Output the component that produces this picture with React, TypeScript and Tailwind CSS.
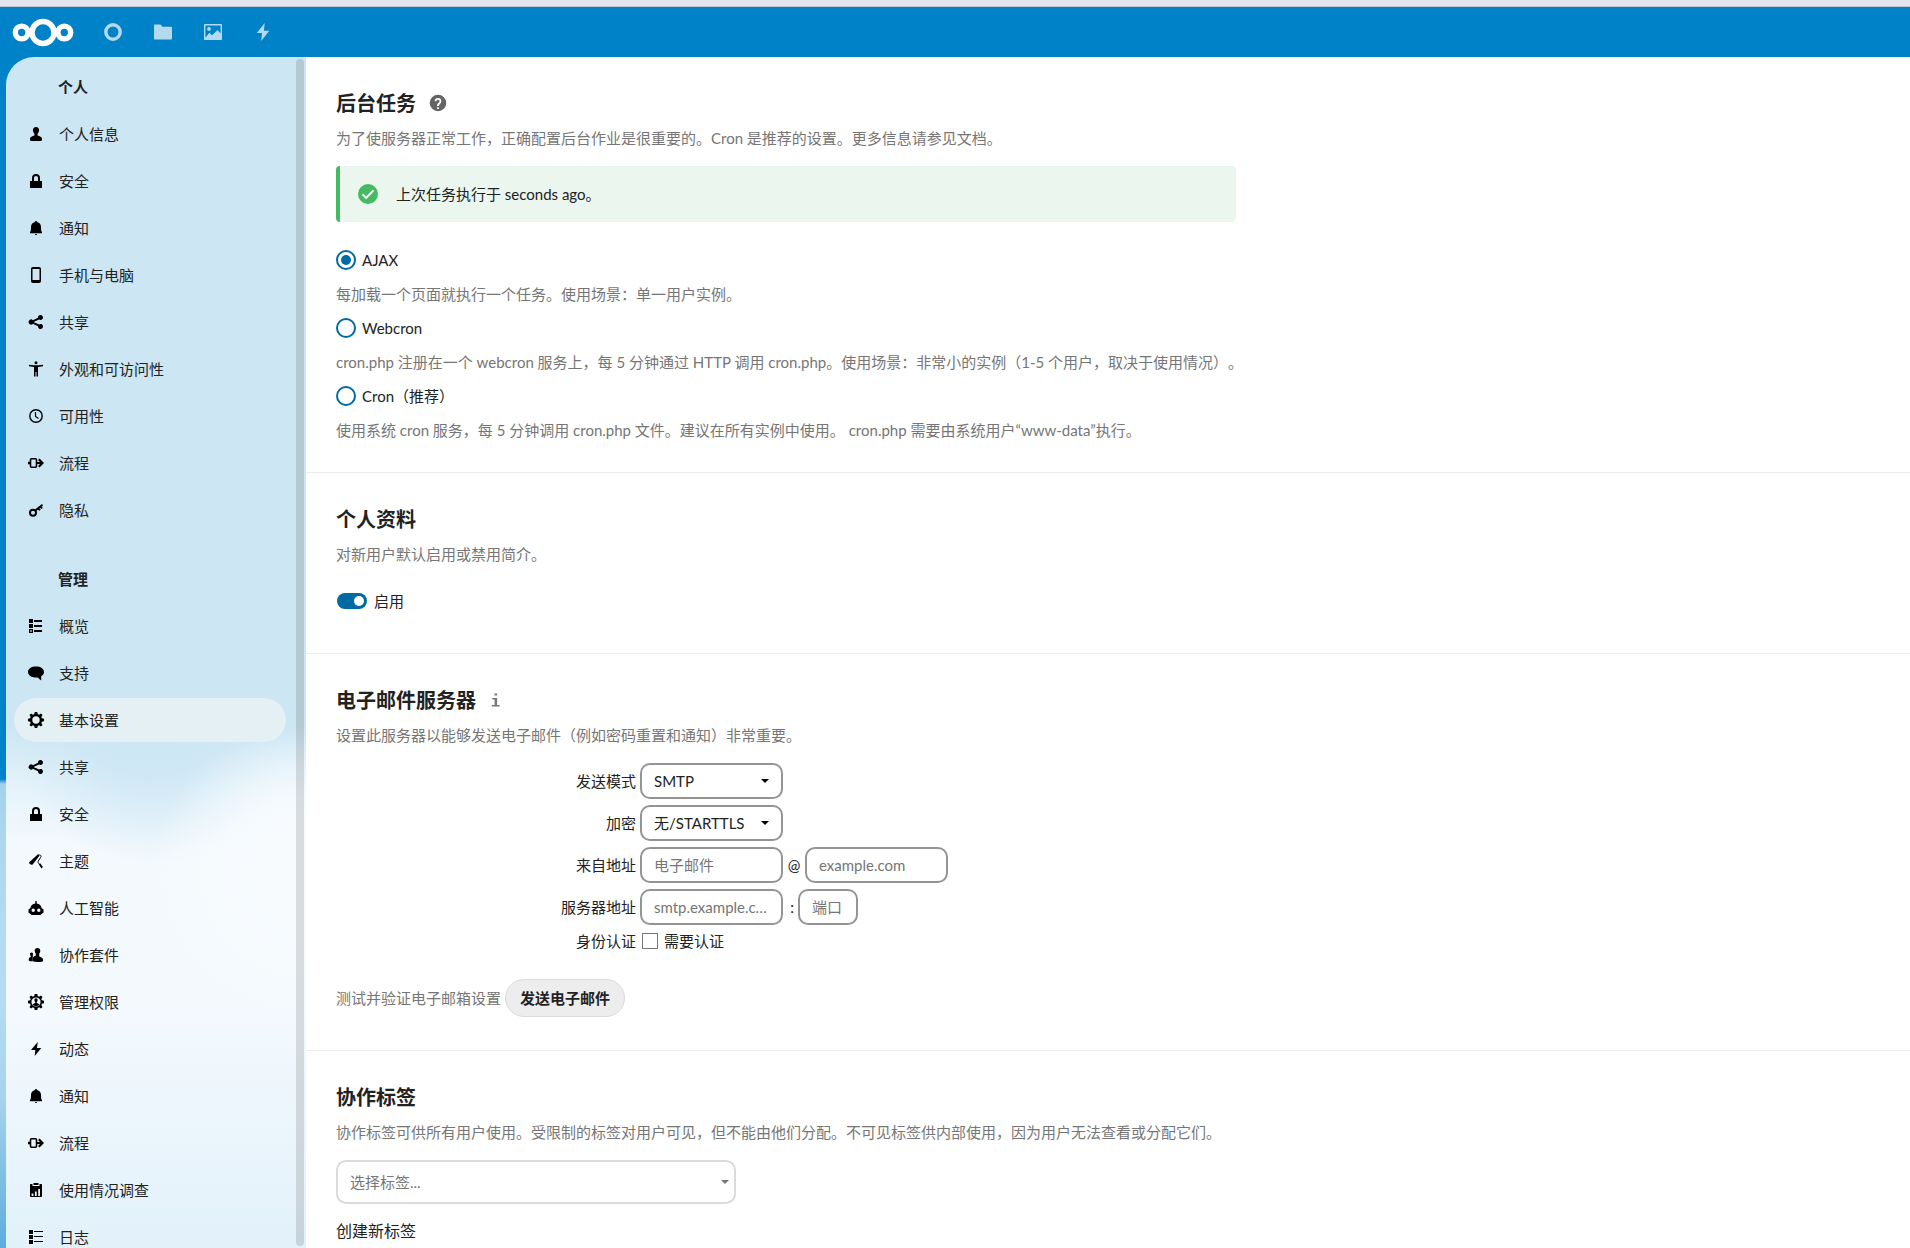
import React, { useId, useState } from 'react';

type IconProps = { className?: string };
type NavItem = { name: string; icon: React.ReactNode; active?: boolean };

function Svg({ children, box = 16, className = 'h-4 w-4' }: { children: React.ReactNode; box?: number; className?: string }) {
  return (
    <svg viewBox={`0 0 ${box} ${box}`} className={`${className} shrink-0`} fill="currentColor" aria-hidden="true">
      {children}
    </svg>
  );
}

const icons = {
  user: (
    <Svg>
      <path d="M8 1C6 1 4.800 2.300 4.900 4.300c.1 1.700.8 2.500 1.500 3.500v1.600C4.400 10 2 10.800 2 12.800V14c0 .6.700 1 3 1h6c2.300 0 3-.4 3-1v-1.200c0-2-2.400-2.800-4.400-3.400V7.800c.7-1 1.400-1.800 1.500-3.500C11.200 2.300 10 1 8 1Z" />
    </Svg>
  ),
  lock: (
    <Svg>
      <path d="M8 1a4 4 0 0 0-4 4v3H2v7h12V8h-2V5a4 4 0 0 0-4-4Zm0 2a2 2 0 0 1 2 2v3H6V5a2 2 0 0 1 2-2Z" />
    </Svg>
  ),
  bell: (
    <Svg>
      <path d="M8 1c-.6 0-1 .3-1 1-2.600.5-4 2.500-4 5 0 3.500-.4 4.500-1 5.200V13.300h12v-1.100c-.6-.7-1-1.700-1-5.200 0-2.500-1.400-4.500-4-5 0-.7-.4-1-1-1ZM7 14c0 .6.400 1 1 1s1-.4 1-1Z" />
    </Svg>
  ),
  phone: (
    <Svg>
      <path fillRule="evenodd" d="M5 0h6c1.200 0 2 .8 2 2v12c0 1.200-.8 2-2 2H5c-1.200 0-2-.8-2-2V2C3 .8 3.800 0 5 0Zm-.5 2v11h7V2Z" />
    </Svg>
  ),
  share: (
    <Svg>
      <path d="M12.500 1A2.500 2.500 0 0 0 10 3.500l.02.300L4.900 6.200A2.500 2.500 0 1 0 4.900 9.800l5.100 2.400-.02.300A2.500 2.500 0 1 0 11.100 10.400L6 8.200V7.800l5.100-2.200A2.500 2.500 0 1 0 12.500 1Z" />
    </Svg>
  ),
  accessibility: (
    <Svg>
      <circle cx="8" cy="1.800" r="1.500" />
      <path d="M1 3.700v1.500l5 .8v9.500h1.500V11h1v4.500H10V6l5-.8V3.700L10 4.300H6Z" />
    </Svg>
  ),
  clock: (
    <Svg>
      <circle cx="8" cy="8" r="6.200" fill="none" stroke="currentColor" strokeWidth="1.400" />
      <path d="M7.500 4v4.500l3 2" fill="none" stroke="currentColor" strokeWidth="1.200" />
    </Svg>
  ),
  flow: (
    <Svg>
      <rect x="2.500" y="3.700" width="6" height="8.600" rx="1" fill="none" stroke="currentColor" strokeWidth="1.600" />
      <path d="M0 6.800h2v2.400H0Z" />
      <path d="M9 8h5M10.800 4.300 14.500 8l-3.700 3.700" fill="none" stroke="currentColor" strokeWidth="2.200" />
    </Svg>
  ),
  key: (
    <Svg>
      <circle cx="5" cy="10.800" r="3" fill="none" stroke="currentColor" strokeWidth="2" />
      <path d="m7 8.800 7.500-6M10.200 6.200l1.800 2M12.300 4.500l1.800 1.800" fill="none" stroke="currentColor" strokeWidth="2" />
    </Svg>
  ),
  overview: (
    <Svg>
      <path d="M1 1h4v4H1Zm0 5h4v4H1ZM6 2h8v2H6Zm0 5h8v2H6Zm0 5h8v2H6Z" />
      <path fillRule="evenodd" d="M1 11h4v4H1Zm1.200 1.200v1.600h1.600v-1.600Z" />
    </Svg>
  ),
  chat: (
    <Svg>
      <path d="M8 1.500C3.500 1.500 0 3.500 0 7c0 3.400 3.500 5.500 8 5.500.6 0 1.200 0 1.800-.1 1 1 2 1.800 3.400 3.100v-4.300C15 10.200 16 8.800 16 7c0-3.500-3.500-5.500-8-5.500Z" />
    </Svg>
  ),
  gear: (
    <Svg>
      <path
        fillRule="evenodd"
        d="M6.700 0 6.300 2.100 4.900 2.700 3.100 1.500 1.500 3.100l1.200 1.800-.6 1.400L0 6.700v2.600l2.100.4.600 1.400-1.200 1.800 1.600 1.600 1.800-1.200 1.400.6.400 2.100h2.600l.4-2.100 1.400-.6 1.800 1.200 1.600-1.600-1.200-1.800.6-1.400 2.100-.4V6.700l-2.100-.4-.6-1.400 1.200-1.800-1.600-1.600-1.800 1.200-1.400-.6L9.300 0ZM8 4.300a3.700 3.700 0 1 1 0 7.400 3.700 3.700 0 0 1 0-7.400Z"
      />
    </Svg>
  ),
  brush: (
    <Svg>
      <path d="m1.200 9.200 8.500-7.700c.9-.7 2.300.6 1.600 1.500L4.600 11.500c-1 1-4-.9-3.400-2.300Z" />
      <path d="M11.500 1.800c1.800.7 2 1.300 1.200 2.500L10.300 8c-.6.900-.3 1.700.5 2.400l.8 1" fill="none" stroke="currentColor" strokeWidth="1" />
      <path d="m10.700 11.300 1.500-1 2.700 3.700-1.400 1.500Z" />
    </Svg>
  ),
  robot: (
    <Svg>
      <path
        fillRule="evenodd"
        d="M7.300 1h1.400v2.500C11.500 3.700 13.300 5.500 13.500 8l2 1.500v3L13.500 14c-.5.700-1 1-2 1h-7c-1 0-1.500-.3-2-1L.5 12.500v-3l2-1.500c.2-2.500 2-4.300 4.800-4.500ZM5.200 8.600a1.700 1.700 0 1 0 0 3.400 1.700 1.700 0 0 0 0-3.400Zm5.600 0a1.700 1.700 0 1 0 0 3.400 1.700 1.700 0 0 0 0-3.400Z"
      />
    </Svg>
  ),
  users: (
    <Svg>
      <path d="M9.300 1C7.500 1 6.600 2.200 6.700 3.800c.1 1.300.6 2.100 1.100 2.900v1.800c-1.400.6-2.600 1-2.800 2.300l-.2 3c0 .7 1 1.200 4.500 1.200S15 14.600 15 13.900v-1.400c0-1.700-2-2.300-3.800-3.300V6.700c.6-.8 1-1.600 1.100-2.900C12.400 2.200 11.200 1 9.300 1Z" />
      <path d="M3.600 5.500c-1.200 0-1.700.8-1.600 1.800.1.800.4 1.200.7 1.600v1.200c-1 .5-1.900.8-1.900 1.900v1.500c0 .5 1 .8 3 .8h1V8.500C5.500 6.500 4.800 5.500 3.600 5.500Z" />
    </Svg>
  ),
  admin: (
    <Svg>
      <path
        fillRule="evenodd"
        d="M6.700 0 6.300 2.100 4.900 2.700 3.100 1.500 1.500 3.100l1.200 1.800-.6 1.400L0 6.700v2.600l2.100.4.600 1.400-1.200 1.800 1.600 1.600 1.800-1.200 1.400.6.400 2.100h2.600l.4-2.100 1.400-.6 1.800 1.200 1.600-1.600-1.200-1.800.6-1.400 2.100-.4V6.700l-2.100-.4-.6-1.400 1.200-1.800-1.600-1.600-1.800 1.200-1.400-.6L9.300 0ZM8 3.400a4.600 4.600 0 1 1 0 9.200 4.600 4.600 0 0 1 0-9.200Z"
      />
      <path d="M8 4.300c-1.200 0-1.700.9-1.600 1.900.1.800.4 1.300.8 1.700v1.200c-1.200.4-2.200.8-2.500 1.700 1.500 1.700 5.100 1.700 6.600 0-.3-.9-1.300-1.300-2.500-1.700V7.900c.4-.4.7-.9.8-1.700.1-1-.4-1.900-1.600-1.900Z" />
    </Svg>
  ),
  bolt: (
    <Svg>
      <path d="M9.700 1 3 9h4.300L6.700 15 13.300 7H9Z" />
    </Svg>
  ),
  survey: (
    <Svg>
      <path
        fillRule="evenodd"
        d="M3 2h1.500v2h7V2H13c.6 0 1 .4 1 1v11c0 .6-.4 1-1 1H3c-.6 0-1-.4-1-1V3c0-.6.400-1 1-1Zm.6 9.500V14h1.800v-2.500ZM6.900 9.500V14h1.800V9.500Zm3.300-2.500v7H12V7Z"
      />
      <path d="M5.500 1h5v2h-5Z" />
    </Svg>
  ),
  log: (
    <Svg>
      <path d="M1 1h4v4H1Zm0 5h4v4H1Zm0 5h4v4H1ZM6 2h9v1H6Zm0 5h9v1H6Zm0 5h9v1H6Z" />
    </Svg>
  ),
};

const personalItems: NavItem[] = [
  { name: '个人信息', icon: icons.user },
  { name: '安全', icon: icons.lock },
  { name: '通知', icon: icons.bell },
  { name: '手机与电脑', icon: icons.phone },
  { name: '共享', icon: icons.share },
  { name: '外观和可访问性', icon: icons.accessibility },
  { name: '可用性', icon: icons.clock },
  { name: '流程', icon: icons.flow },
  { name: '隐私', icon: icons.key },
];

const adminItems: NavItem[] = [
  { name: '概览', icon: icons.overview },
  { name: '支持', icon: icons.chat },
  { name: '基本设置', icon: icons.gear, active: true },
  { name: '共享', icon: icons.share },
  { name: '安全', icon: icons.lock },
  { name: '主题', icon: icons.brush },
  { name: '人工智能', icon: icons.robot },
  { name: '协作套件', icon: icons.users },
  { name: '管理权限', icon: icons.admin },
  { name: '动态', icon: icons.bolt },
  { name: '通知', icon: icons.bell },
  { name: '流程', icon: icons.flow },
  { name: '使用情况调查', icon: icons.survey },
  { name: '日志', icon: icons.log },
];

const cronModes = [
  { id: 'ajax', label: 'AJAX', hint: '每加载一个页面就执行一个任务。使用场景：单一用户实例。' },
  {
    id: 'webcron',
    label: 'Webcron',
    hint: 'cron.php 注册在一个 webcron 服务上，每 5 分钟通过 HTTP 调用 cron.php。使用场景：非常小的实例（1-5 个用户，取决于使用情况）。',
  },
  {
    id: 'cron',
    label: 'Cron（推荐）',
    hint: '使用系统 cron 服务，每 5 分钟调用 cron.php 文件。建议在所有实例中使用。 cron.php 需要由系统用户“www-data”执行。',
  },
];

const appLinks = [
  {
    name: '仪表盘',
    icon: <circle cx="10" cy="10" r="7.200" fill="none" stroke="currentColor" strokeWidth="3.400" />,
  },
  {
    name: '文件',
    icon: <path d="M1.800 2.500h5.700l2 2.300h8.700c.4 0 .8.400.8.800v11.100c0 .4-.4.800-.8.800H1.800c-.4 0-.8-.4-.8-.8V3.300c0-.4.400-.8.800-.8Z" />,
  },
  {
    name: '照片',
    icon: (
      <path
        fillRule="evenodd"
        d="M2 2h16c.6 0 1 .4 1 1v14c0 .6-.4 1-1 1H2c-.6 0-1-.4-1-1V3c0-.6.400-1 1-1Zm.4 1.400v12l4.100-4.600 2.500 2.400 5.500-5.200 3.100 3.500V3.400ZM6 5a1.900 1.900 0 1 1 0 3.800A1.900 1.900 0 0 1 6 5Z"
      />
    ),
  },
  {
    name: '动态',
    icon: <path d="M11.700 1 3.800 11h5.200L8.300 19 16.200 8.700h-5.300Z" />,
  },
];

function Logo({ className }: IconProps) {
  return (
    <svg viewBox="0 0 62 30" className={className} fill="none" stroke="white" strokeWidth="5.400" aria-hidden="true">
      <circle cx="31" cy="15.500" r="11" />
      <circle cx="9.700" cy="15.500" r="6.400" />
      <circle cx="52.300" cy="15.500" r="6.400" />
    </svg>
  );
}

function Caret({ className }: IconProps) {
  return (
    <svg viewBox="0 0 8 4" className={`pointer-events-none h-1 w-2 ${className}`} fill="currentColor" aria-hidden="true">
      <path d="M0 0h8L4 4Z" />
    </svg>
  );
}

function Header() {
  return (
    <header className="flex h-[50px] shrink-0 items-center pl-3">
      <a href="#home" aria-label="Nextcloud">
        <Logo className="h-[30px] w-[62px]" />
      </a>
      <nav className="ml-[14px] flex">
        {appLinks.map((app) => (
          <a key={app.name} href="#app" aria-label={app.name} className="flex h-[50px] w-[50px] items-center justify-center text-white/70">
            <Svg box={20} className="h-5 w-5">
              {app.icon}
            </Svg>
          </a>
        ))}
      </nav>
    </header>
  );
}

function NavList({ title, items }: { title: string; items: NavItem[] }) {
  return (
    <div>
      <h3 className="mb-[3px] flex h-11 items-center pl-[44px] font-bold">{title}</h3>
      <ul className="flex flex-col gap-[3px]">
        {items.map((item) => (
          <li key={item.name}>
            <a
              href="#settings"
              aria-current={item.active ? 'page' : undefined}
              className={`flex h-11 items-center gap-[15px] rounded-full pl-[14px] ${item.active ? 'bg-[#e4f0f4]' : ''}`}
            >
              <span className="text-black">{item.icon}</span>
              {item.name}
            </a>
          </li>
        ))}
      </ul>
    </div>
  );
}

function Sidebar() {
  return (
    <aside className="flex w-[300px] shrink-0 justify-between overflow-hidden rounded-tl-[28px] bg-[radial-gradient(ellipse_170px_150px_at_310px_820px,#f7fbfe_0%,#f7fbfe_40%,#f7fbfe80_70%,#f7fbfe00_100%),radial-gradient(ellipse_140px_150px_at_145px_660px,#cce6f4_0%,#cce6f4d0_40%,#cce6f460_70%,#cce6f400_100%),linear-gradient(to_bottom,#cce6f3_0px,#cce6f3_670px,#e6f3fb_735px,#f4f9fd_790px,#f3f9fd_960px,#ebf5fc_1070px,#e2f1fa_1191px)]">
      <nav className="flex w-[280px] flex-col gap-[25px] pt-2 pl-2">
        <NavList title="个人" items={personalItems} />
        <NavList title="管理" items={adminItems} />
      </nav>
      <div className="my-[2px] mr-[2px] w-2 rounded-full bg-black/12" />
    </aside>
  );
}

function Section({ title, hint, badge, children }: { title: string; hint: string; badge?: React.ReactNode; children: React.ReactNode }) {
  return (
    <section className="border-b border-[#ededed] p-[30px]">
      <h2 className="mb-[7px] flex h-8 items-center text-xl font-bold">
        {title}
        {badge}
      </h2>
      <p className="leading-6 text-[#767676]">{hint}</p>
      {children}
    </section>
  );
}

function BackgroundJobs() {
  const [mode, setMode] = useState('ajax');

  return (
    <Section
      title="后台任务"
      hint="为了使服务器正常工作，正确配置后台作业是很重要的。Cron 是推荐的设置。更多信息请参见文档。"
      badge={
        <a href="#docs" aria-label="文档" className="ml-3 text-[#646464]">
          <Svg box={20} className="h-5 w-5">
            <path
              fillRule="evenodd"
              d="M10 1.700a8.300 8.300 0 1 1 0 16.600 8.300 8.300 0 0 1 0-16.600Zm-.9 12.500v1.700h1.800v-1.700Zm-2.400-5.900h1.700a1.600 1.600 0 1 1 3.200 0c0 1.600-2.500 1.500-2.500 4.700h1.800c0-2 2.400-2.300 2.400-4.700a3.300 3.300 0 1 0-6.600 0Z"
            />
          </Svg>
        </a>
      }
    >
      <div className="mt-4 flex h-14 max-w-[900px] items-center rounded border-l-4 border-[#46ba61] bg-[#ebf6ef] pl-[18px]">
        <Svg box={20} className="h-5 w-5 text-[#46ba61]">
          <circle cx="10" cy="10" r="10" />
          <path d="m4.500 10.200 3.700 3.700 7.300-7.500" fill="none" stroke="white" strokeWidth="2" />
        </Svg>
        <span className="ml-[18px]">上次任务执行于 seconds ago。</span>
      </div>
      <div className="mt-[21px] flex flex-col gap-[5px]">
        {cronModes.map((item) => (
          <div key={item.id} className="flex flex-col gap-[5px]">
            <label className="flex h-[34px] items-center gap-[6px]">
              <input
                type="radio"
                name="cron-mode"
                checked={mode === item.id}
                onChange={() => setMode(item.id)}
                className="m-0 h-5 w-5 appearance-none rounded-full border-2 border-[#006aa3] bg-white p-[3px] before:block before:h-[10px] before:w-[10px] before:rounded-full checked:before:bg-[#006aa3]"
              />
              {item.label}
            </label>
            <p className="leading-6 text-[#767676] [text-spacing-trim:space-all]">{item.hint}</p>
          </div>
        ))}
      </div>
    </Section>
  );
}

function Profile() {
  const [enabled, setEnabled] = useState(true);

  return (
    <Section title="个人资料" hint="对新用户默认启用或禁用简介。">
      <label className="mt-[13px] flex h-11 items-center gap-[7px] pl-px">
        <input
          type="checkbox"
          role="switch"
          checked={enabled}
          onChange={() => setEnabled(!enabled)}
          className="flex h-4 w-[30px] appearance-none items-center rounded-full bg-[#8c8c8c] px-[3px] before:h-[10px] before:w-[10px] before:rounded-full before:bg-white checked:justify-end checked:bg-[#006aa3]"
        />
        启用
      </label>
    </Section>
  );
}

const fieldClass = 'h-9 rounded-[10px] border-2 border-[#949494] bg-white px-3 placeholder:text-[#767676] placeholder:opacity-100';

function FormRow({ label, htmlFor, children }: { label: string; htmlFor: string; children: React.ReactNode }) {
  return (
    <div className="flex items-center gap-1 leading-5">
      <label htmlFor={htmlFor} className="w-[300px] text-right">
        {label}
      </label>
      {children}
    </div>
  );
}

function SelectField({ id, options }: { id: string; options: string[] }) {
  return (
    <div className="relative">
      <select id={id} className={`${fieldClass} w-[143px] appearance-none py-0`}>
        {options.map((option) => (
          <option key={option}>{option}</option>
        ))}
      </select>
      <Caret className="absolute top-4 right-[14px] text-black" />
    </div>
  );
}

function MailServer() {
  const id = useId();

  return (
    <Section
      title="电子邮件服务器"
      hint="设置此服务器以能够发送电子邮件（例如密码重置和通知）非常重要。"
      badge={
        <a href="#mail-docs" aria-label="邮件文档" className="ml-3 text-[#767676]">
          <Svg>
            <path d="M6.500 1.500h2.600v2H6.500ZM4.300 6h4.800v7h2.600v1.500H3.800V13h2.800V7.500H4.300Z" />
          </Svg>
        </a>
      }
    >
      <div className="mt-4 flex flex-col gap-[6px]">
        <FormRow label="发送模式" htmlFor={`${id}-mode`}>
          <SelectField id={`${id}-mode`} options={['SMTP', 'Sendmail']} />
        </FormRow>
        <FormRow label="加密" htmlFor={`${id}-secure`}>
          <SelectField id={`${id}-secure`} options={['无/STARTTLS', 'SSL/TLS']} />
        </FormRow>
        <FormRow label="来自地址" htmlFor={`${id}-from`}>
          <input id={`${id}-from`} type="text" placeholder="电子邮件" className={`${fieldClass} w-[143px]`} />
          <span className="w-[14px] text-center">@</span>
          <input type="text" aria-label="域名" placeholder="example.com" className={`${fieldClass} w-[143px]`} />
        </FormRow>
        <FormRow label="服务器地址" htmlFor={`${id}-host`}>
          <input id={`${id}-host`} type="text" placeholder="smtp.example.com" className={`${fieldClass} w-[143px] text-ellipsis`} />
          <span className="w-[7px] text-right">:</span>
          <input type="text" aria-label="端口" placeholder="端口" className={`${fieldClass} w-[60px]`} />
        </FormRow>
        <FormRow label="身份认证" htmlFor={`${id}-auth`}>
          <input id={`${id}-auth`} type="checkbox" className="mx-[2px] h-4 w-4 appearance-none border border-[#767676] bg-white checked:bg-[#006aa3]" />
          <label htmlFor={`${id}-auth`}>需要认证</label>
        </FormRow>
      </div>
      <div className="mt-[25px] flex h-11 items-center gap-1 text-[#767676]">
        测试并验证电子邮箱设置
        <button type="button" className="h-[38px] rounded-full border border-[#dbdbdb] bg-[#ededed] px-[14px] font-bold text-[#222]">
          发送电子邮件
        </button>
      </div>
    </Section>
  );
}

function Tags() {
  return (
    <Section title="协作标签" hint="协作标签可供所有用户使用。受限制的标签对用户可见，但不能由他们分配。不可见标签供内部使用，因为用户无法查看或分配它们。">
      <div className="relative mt-4 max-w-[400px] text-[#767676]">
        <select aria-label="选择标签" className="h-11 w-full appearance-none rounded-[10px] border-2 border-[#dbdbdb] bg-white px-3">
          <option>选择标签...</option>
        </select>
        <Caret className="absolute top-5 right-[7px]" />
      </div>
      <h3 className="mt-[15px] text-base leading-6">创建新标签</h3>
    </Section>
  );
}

export default function App() {
  return (
    <div
      lang="zh-CN"
      className="flex h-screen flex-col overflow-hidden bg-[linear-gradient(to_bottom,#0082c9_0px,#0082c9_779px,#a3d2ec_784px,#afd8ef_850px,#b5dcf2_1000px,#a5d3ec_1100px,#5badde_1248px)] font-[Lato,'Noto_Sans_CJK_SC',sans-serif] text-[15px] text-[#222]"
    >
      <div className="h-[7px] shrink-0 border-b border-[#c5c8d0] bg-[#e4e4ef]" />
      <Header />
      <div className="flex min-h-0 flex-1 pl-[6px]">
        <Sidebar />
        <main className="min-w-0 flex-1 overflow-hidden bg-white">
          <BackgroundJobs />
          <Profile />
          <MailServer />
          <Tags />
        </main>
      </div>
    </div>
  );
}
